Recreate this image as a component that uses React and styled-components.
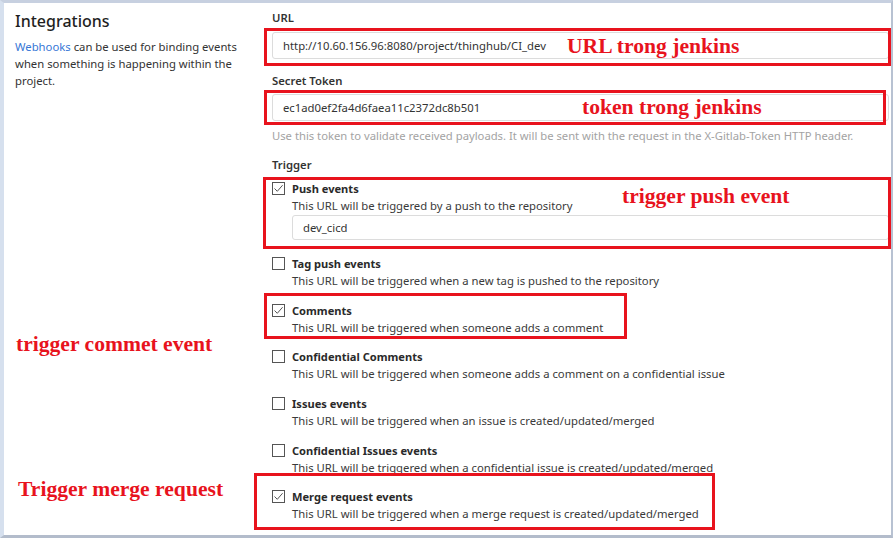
import styled, { createGlobalStyle } from "styled-components";

const Global = createGlobalStyle`
  html, body {
    margin: 0;
    padding: 0;
    background: #c8d1e0;
  }
  * { box-sizing: border-box; }
`;

const Frame = styled.div`
  position: relative;
  width: 893px;
  height: 538px;
  overflow: hidden;
  background: #fff;
  border-top: 3px solid #c7d0e0;
  border-left: 4px solid #d6e0ee;
  border-right: 2px solid #b8c2d2;
  border-bottom: 3px solid #b3bccb;
  font-family: "Noto Sans", "Open Sans", sans-serif;
  color: #2e2e2e;
  display: grid;
  grid-template-columns: 268px 1fr;
`;

const Side = styled.div`
  padding: 7px 0 0 11px;
`;

const Title = styled.h2`
  margin: 0;
  font-size: 16px;
  font-weight: 500;
  line-height: 22px;
  color: #1f1f1f;
`;

const SideText = styled.p`
  margin: 6px 0 0;
  font-size: 11.3px;
  line-height: 17px;
  width: 240px;
  color: #333;

  a {
    color: #3777d6;
    text-decoration: none;
  }
`;

const Main = styled.div`
  padding: 6px 2px 0 0;
  display: flex;
  flex-direction: column;
`;

const Label = styled.div`
  font-size: 11.3px;
  font-weight: 600;
  line-height: 17px;
  color: #333;
  margin-top: ${(p) => p.$top || 0}px;
`;

const Input = styled.div`
  height: ${(p) => p.$h || 27}px;
  margin-top: ${(p) => p.$top || 0}px;
  border: 1px solid #dcdcdc;
  border-radius: 3px;
  padding: 0 10px;
  display: flex;
  align-items: center;
  font-size: 11.3px;
  color: #333;
`;

const Help = styled.div`
  margin-top: 6px;
  font-size: 11.25px;
  line-height: 17px;
  color: #a3a3a3;
`;

const Option = styled.div`
  display: flex;
  gap: 7px;
  margin-top: ${(p) => p.$top}px;
`;

const Box = styled.span`
  flex: none;
  width: 13px;
  height: 13px;
  margin-top: 2px;
  border: 1px solid #555;
  background: #fff;
  display: flex;
  align-items: center;
  justify-content: center;
`;

const OptionBody = styled.div`
  flex: 1;
  display: flex;
  flex-direction: column;
`;

const OptionTitle = styled.div`
  font-size: 11.1px;
  font-weight: 700;
  line-height: 17px;
  color: #2a2a2a;
`;

const OptionDesc = styled.div`
  font-size: 11.3px;
  line-height: 17px;
  color: #3a3a3a;
`;

const Mark = styled.div`
  position: absolute;
  left: ${(p) => p.$x - 4}px;
  top: ${(p) => p.$y - 3}px;
  width: ${(p) => p.$w}px;
  height: ${(p) => p.$h}px;
  border: 3px solid #e8131d;
  pointer-events: none;
`;

const Note = styled.div`
  position: absolute;
  left: ${(p) => p.$x - 4}px;
  top: ${(p) => p.$y - 3}px;
  font-family: "Liberation Serif", "Times New Roman", serif;
  font-weight: 700;
  font-size: 21.6px;
  line-height: 24px;
  color: #e8131d;
  white-space: nowrap;
`;

const Check = () => (
  <svg width="11" height="11" viewBox="0 0 11 11">
    <path d="M1.5 5.5 L4.3 8.3 L9.6 2.2" fill="none" stroke="#555" strokeWidth="1" />
  </svg>
);

const options = [
  { title: "Push events", desc: "This URL will be triggered by a push to the repository", on: true, top: 7, branch: "dev_cicd" },
  { title: "Tag push events", desc: "This URL will be triggered when a new tag is pushed to the repository", top: 15 },
  { title: "Comments", desc: "This URL will be triggered when someone adds a comment", on: true, top: 13 },
  { title: "Confidential Comments", desc: "This URL will be triggered when someone adds a comment on a confidential issue", top: 12 },
  { title: "Issues events", desc: "This URL will be triggered when an issue is created/updated/merged", top: 13 },
  { title: "Confidential Issues events", desc: "This URL will be triggered when a confidential issue is created/updated/merged", top: 13 },
  { title: "Merge request events", desc: "This URL will be triggered when a merge request is created/updated/merged", on: true, top: 12 },
];

export default function App() {
  return (
    <>
      <Global />
      <Frame>
        <Side>
          <Title>Integrations</Title>
          <SideText>
            <a href="#webhooks">Webhooks</a> can be used for binding events when something is happening within the project.
          </SideText>
        </Side>
        <Main>
          <Label>URL</Label>
          <Input $top={6}>http://10.60.156.96:8080/project/thinghub/CI_dev</Input>
          <Label $top={13}>Secret Token</Label>
          <Input $top={5}>ec1ad0ef2fa4d6faea11c2372dc8b501</Input>
          <Help>Use this token to validate received payloads. It will be sent with the request in the X-Gitlab-Token HTTP header.</Help>
          <Label $top={12}>Trigger</Label>
          {options.map((o) => (
            <Option key={o.title} $top={o.top}>
              <Box>{o.on && <Check />}</Box>
              <OptionBody>
                <OptionTitle>{o.title}</OptionTitle>
                <OptionDesc>{o.desc}</OptionDesc>
                {o.branch && <Input $h={25} $top={1}>{o.branch}</Input>}
              </OptionBody>
            </Option>
          ))}
        </Main>

        <Mark $x={264} $y={28} $w={627} $h={38} />
        <Mark $x={264} $y={90} $w={622} $h={35} />
        <Mark $x={263} $y={177} $w={628} $h={72} />
        <Mark $x={264} $y={293} $w={363} $h={46} />
        <Mark $x={254} $y={473} $w={461} $h={57} />

        <Note $x={567} $y={34}>URL trong jenkins</Note>
        <Note $x={582} $y={95}>token trong jenkins</Note>
        <Note $x={622} $y={184}>trigger push event</Note>
        <Note $x={16} $y={332}>trigger commet event</Note>
        <Note $x={18} $y={477}>Trigger merge request</Note>
      </Frame>
    </>
  );
}
